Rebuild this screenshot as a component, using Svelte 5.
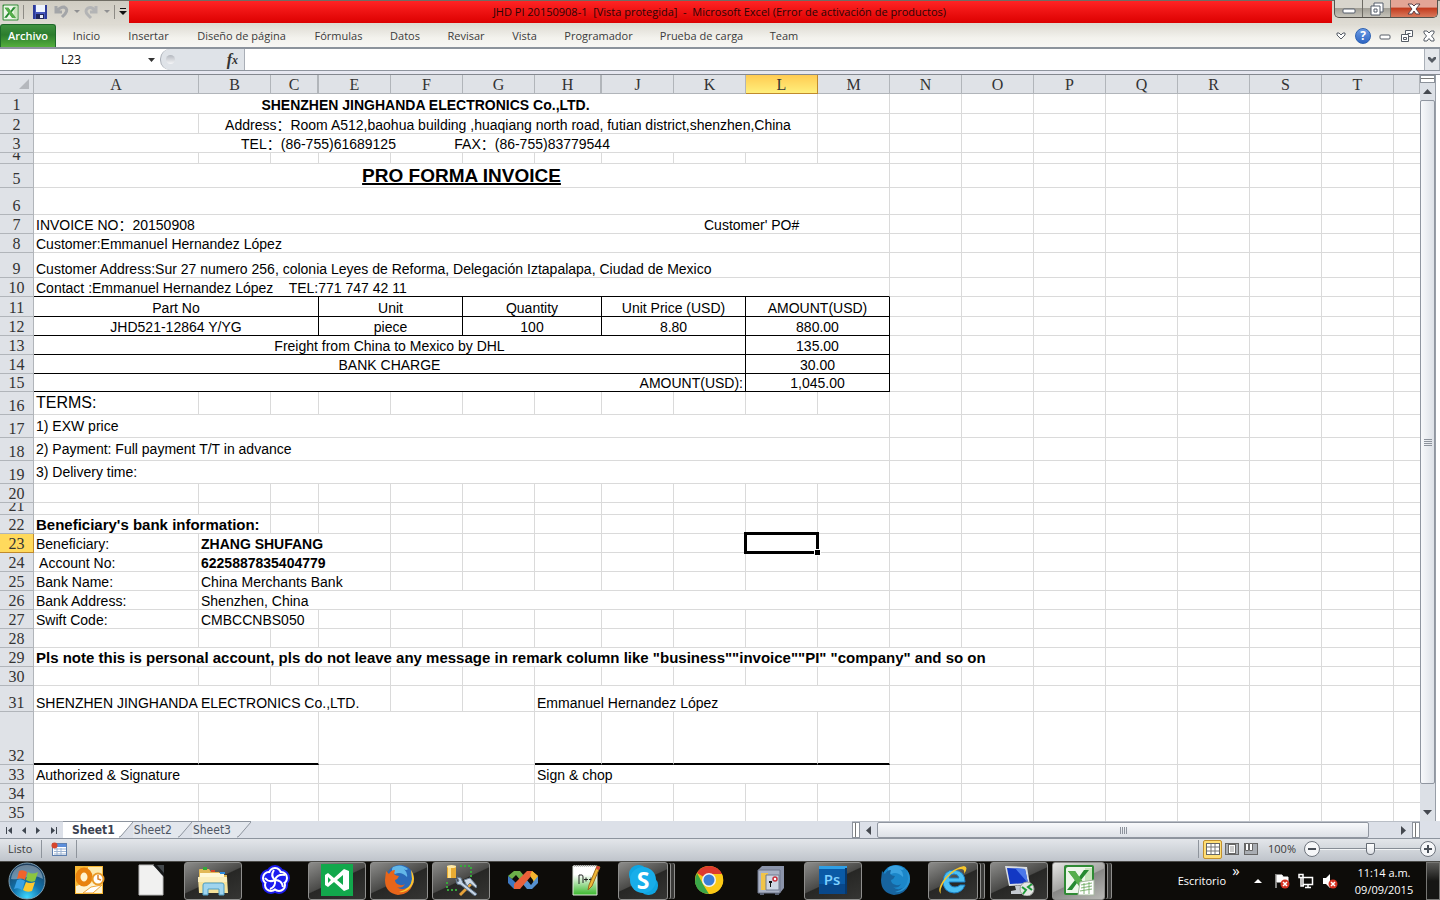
<script>
  const columns = [
    ['A', 165], ['B', 72], ['C', 48], ['E', 72], ['F', 72], ['G', 72], ['H', 67],
    ['J', 72], ['K', 72], ['L', 72], ['M', 72], ['N', 72], ['O', 72], ['P', 72],
    ['Q', 72], ['R', 72], ['S', 72], ['T', 72], ['', 0],
  ];

  // Each row: height and its leading cells as [span, text, classes]; the rest are single empty cells.
  const rowData = [
    [20, [[10, 'SHENZHEN JINGHANDA ELECTRONICS Co.,LTD.', 'center bold']]],
    [20, [[1], [9, 'Address：Room A512,baohua building ,huaqiang north road, futian district,shenzhen,China', 'center']]],
    [19, [[10, 'TEL：(86-755)61689125               FAX：(86-755)83779544', 'center']]],
    [11, []],
    [24, [[11, 'PRO FORMA INVOICE', 'center bold heading']]],
    [27, [[11]]],
    [19, [[8, 'INVOICE NO：20150908', 'open'], [3, "Customer' PO#", 'indent']]],
    [19, [[11, 'Customer:Emmanuel Hernandez López']]],
    [25, [[11, 'Customer Address:Sur 27 numero 256, colonia Leyes de Reforma, Delegación Iztapalapa, Ciudad de Mexico']]],
    [19, [[11, 'Contact :Emmanuel Hernandez López    TEL:771 747 42 11', 'ruled-below']]],
    [20, [[3, 'Part No', 'center ruled'], [2, 'Unit', 'center ruled'], [2, 'Quantity', 'center ruled'], [2, 'Unit Price (USD)', 'center ruled'], [2, 'AMOUNT(USD)', 'center ruled']]],
    [19, [[3, 'JHD521-12864 Y/YG', 'center ruled'], [2, 'piece', 'center ruled'], [2, '100', 'center ruled'], [2, '8.80', 'center ruled'], [2, '880.00', 'center ruled']]],
    [19, [[9, 'Freight from China to Mexico by DHL', 'center ruled'], [2, '135.00', 'center ruled']]],
    [19, [[9, 'BANK CHARGE', 'center ruled'], [2, '30.00', 'center ruled']]],
    [18, [[9, 'AMOUNT(USD):', 'right ruled'], [2, '1,045.00', 'center ruled']]],
    [23, [[1, 'TERMS:', 'large middle']]],
    [23, [[11, '1) EXW price', 'middle']]],
    [23, [[11, '2) Payment: Full payment T/T in advance', 'middle']]],
    [23, [[11, '3) Delivery time:', 'middle']]],
    [19, []],
    [12, []],
    [19, [[2, "Beneficiary's bank information:", 'bold notice']]],
    [19, [[1, 'Beneficiary:'], [3, 'ZHANG SHUFANG', 'bold'], [1], [1], [1], [1], [1], [1, '', 'selected']]],
    [19, [[1, ' Account No:'], [3, '6225887835404779', 'bold']]],
    [19, [[1, 'Bank Name:'], [3, 'China Merchants Bank']]],
    [19, [[1, 'Bank Address:'], [10, 'Shenzhen, China']]],
    [19, [[1, 'Swift Code:'], [2, 'CMBCCNBS050']]],
    [19, []],
    [19, [[13, 'Pls note this is personal account, pls do not leave any message in remark column like "business""invoice""PI" "company" and so on', 'bold notice']]],
    [19, []],
    [26, [[4, 'SHENZHEN JINGHANDA ELECTRONICS Co.,LTD.'], [1], [1], [5, 'Emmanuel Hernandez López']]],
    [53, [[1, '', 'signature'], [2, '', 'signature'], [3], [1, '', 'signature'], [1, '', 'signature'], [2, '', 'signature'], [1, '', 'signature']]],
    [19, [[3, 'Authorized & Signature'], [3], [5, 'Sign & chop']]],
    [19, []],
    [19, []],
  ];

  const rows = rowData.map(([height, lead], i) => {
    const used = lead.reduce((n, c) => n + c[0], 0);
    const cells = [...lead, ...Array.from({ length: columns.length - used }, () => [1])];
    return { number: i + 1, height, cells };
  });

  const ribbon = [
    ['Inicio', 57], ['Insertar', 67], ['Diseño de página', 119], ['Fórmulas', 75], ['Datos', 58],
    ['Revisar', 64], ['Vista', 53], ['Programador', 95], ['Prueba de carga', 111], ['Team', 54],
  ];

  const apps = [
    ['outlook', 'Outlook', ''], ['writer', 'LibreOffice', ''], ['explorer', 'Explorador', 'running'],
    ['knot', 'Navegador', ''], ['studio', 'Visual Studio', 'running'], ['firefox', 'Firefox', 'running'],
    ['tools', 'Herramientas', 'running'], ['vs', 'Visual Studio 2010', ''], ['notepad', 'Notepad++', ''],
    ['skype', 'Skype', 'running stacked'], ['chrome', 'Chrome', ''], ['safe', 'Caja fuerte', ''],
    ['ps', 'Photoshop', 'running'], ['dev', 'Firefox Developer', ''], ['ie', 'Internet Explorer', 'running stacked'],
    ['remote', 'Escritorio remoto', 'running'], ['excel', 'Excel', 'running stacked current'],
  ];

  let cellRef = $state('L23');
  let formula = $state('');
  let zoom = $state(50);
</script>

{#snippet excelLogo()}
  <rect x="1" y="1" width="30" height="30" rx="2" fill="#2f8a34" />
  <path d="M3 5q0-2 2-2h24v26H3z" fill="#eef7ea" />
  <path d="M22 4h7v24h-7z" fill="#c9e4bd" />
  <path d="M5 7h7l4 6 5-7h5l-8 10 8 10h-7l-5-7-5 7H4l8-10z" fill="#268a31" />
  <path d="M5 7h7l14 19h-7z" fill="#56ae4b" />
{/snippet}

<div class="app">
  <header class="title-bar">
    <div class="quick">
      <svg class="logo" viewBox="0 0 32 32" width="17" height="17">{@render excelLogo()}</svg>
      <i class="sep"></i>
      <button class="save" aria-label="Guardar">
        <svg viewBox="0 0 16 16" width="16" height="16"><path d="M1 1h13l1 1v13H1z" fill="#4557bd" /><path d="M1 1h2v14H1zM13 1h2v14h-2z" fill="#2c3b9a" /><path d="M4 1h9v7H4z" fill="#eef4ff" /><path d="M4 10h8v5H4z" fill="#20265c" /><path d="M8 11h3v3H8z" fill="#e8ecf8" /></svg>
      </button>
      <button aria-label="Deshacer">
        <svg viewBox="0 0 26 16" width="26" height="16"><path d="M2 2v6h6M3 7q3-4 7-4 5 2 1 7l-3 3" fill="none" stroke="#a3a5a8" stroke-width="3" /><path d="M20 6h6l-3 3z" fill="#8f9092" /></svg>
      </button>
      <button aria-label="Rehacer">
        <svg viewBox="0 0 26 16" width="26" height="16"><path d="M12 2v6H6M11 7Q8 2 4 4q-4 3 0 7l3 3" fill="none" stroke="#b3b4b5" stroke-width="3" /><path d="M20 6h6l-3 3z" fill="#8f9092" /></svg>
      </button>
      <i class="sep"></i>
      <button aria-label="Personalizar barra">
        <svg viewBox="0 0 8 8" width="8" height="8"><path d="M1 0h6v1H1zM0 3h8L4 7z" fill="#111" /></svg>
      </button>
    </div>
    <h1>JHD PI 20150908-1&nbsp; [Vista protegida]&nbsp; -&nbsp; Microsoft Excel (Error de activación de productos)</h1>
    <div class="window-buttons">
      <button aria-label="Minimizar"><svg viewBox="0 0 14 12" width="14" height="12"><rect x="1" y="6" width="12" height="4" rx="1" fill="#fff" stroke="#555d6b" /></svg></button>
      <button aria-label="Restaurar"><svg viewBox="0 0 14 14" width="14" height="14"><path d="M4 1h9v9h-3v3H1V4h3z" fill="#fff" stroke="#555d6b" /><path d="M4 4h6v6M4 7h3v3H4z" fill="none" stroke="#555d6b" /></svg></button>
      <button class="close" aria-label="Cerrar"><svg viewBox="0 0 14 12" width="14" height="12"><path d="M1 1h4l2 2 2-2h4L9 6l4 5H9L7 8l-2 3H1l4-5z" fill="#fff" stroke="#5a4048" /></svg></button>
    </div>
  </header>

  <nav class="ribbon">
    <button class="file">Archivo</button>
    {#each ribbon as [label, width]}
      <button style="width:{width}px">{label}</button>
    {/each}
    <div class="ribbon-tools">
      <button aria-label="Minimizar la cinta"><svg viewBox="0 0 10 8" width="10" height="8"><path d="M1 1h2l2 2 2-2h2v2L5 7 1 3z" fill="#fff" stroke="#565d66" /></svg></button>
      <button aria-label="Ayuda" class="help">?</button>
      <button aria-label="Minimizar libro"><svg viewBox="0 0 12 12" width="12" height="12"><rect x="1" y="5" width="10" height="4" rx="1" fill="#fff" stroke="#565d66" /></svg></button>
      <button aria-label="Restaurar libro"><svg viewBox="0 0 12 12" width="12" height="12"><path d="M4.500 .5h7v6h-7z" fill="#fff" stroke="#565d66" /><path d="M.5 4.500h7v7h-7z" fill="#fff" stroke="#565d66" /><path d="M2.500 7.500h3v2h-3zM6.500 3.500h3" fill="none" stroke="#565d66" /></svg></button>
      <button aria-label="Cerrar libro"><svg viewBox="0 0 12 12" width="12" height="12"><path d="M1 1h3l2 2 2-2h3v2L8.500 6 11 9v2H8L6 8.500 4 11H1V9l2.500-3L1 3z" fill="#fff" stroke="#565d66" /></svg></button>
    </div>
  </nav>

  <div class="formula-bar">
    <input class="name-box" aria-label="Cuadro de nombres" bind:value={cellRef} />
    <button class="name-drop" aria-label="Nombres"><svg viewBox="0 0 7 4" width="7" height="4"><path d="M0 0h7L3.500 4z" fill="#333" /></svg></button>
    <div class="fx"><i></i><button aria-label="Insertar función"><em>f</em><sub>x</sub></button></div>
    <input class="formula" aria-label="Barra de fórmulas" bind:value={formula} />
    <button class="expand" aria-label="Expandir barra de fórmulas"><svg viewBox="0 0 8 6" width="8" height="6"><path d="M0 0h2l2 2 2-2h2v2L4 6 0 2z" fill="#555b63" /></svg></button>
  </div>
  <div class="strip"></div>

  <main>
    <div class="grid">
      <table>
        <colgroup>
          <col class="gutter" />
          {#each columns as [, width]}
            <col style={width ? `width:${width}px` : undefined} />
          {/each}
        </colgroup>
        <thead>
          <tr>
            <th class="corner"><svg viewBox="0 0 10 10" width="10" height="10"><path d="M10 0v10H0z" fill="#b5b8bd" /></svg></th>
            {#each columns as [name]}
              <th scope="col" class:active={name === 'L'} class:hidden-next={name === 'C' || name === 'H'}>{name}</th>
            {/each}
          </tr>
        </thead>
        <tbody>
          {#each rows as row}
            <tr>
              <th scope="row" class:active={row.number === 23}><div style="height:{row.height - 1}px">{row.number}</div></th>
              {#each row.cells as [span, text, kind]}
                <td colspan={span} class={kind} style="height:{row.height}px">{text ?? ''}</td>
              {/each}
            </tr>
          {/each}
        </tbody>
      </table>
    </div>
    <div class="v-scroll">
      <i class="split"></i>
      <button aria-label="Subir"><svg viewBox="0 0 9 5" width="9" height="5"><path d="M0 5h9L4.500 0z" fill="#44484f" /></svg></button>
      <div class="v-thumb"><i></i><i></i><i></i><i></i></div>
      <button class="down" aria-label="Bajar"><svg viewBox="0 0 9 5" width="9" height="5"><path d="M0 0h9L4.500 5z" fill="#44484f" /></svg></button>
    </div>
  </main>

  <div class="sheet-bar">
    <div class="sheet-nav">
      <button aria-label="Primera hoja"><svg viewBox="0 0 7 7" width="7" height="7"><path d="M0 0h1v7H0zM6 0v7L2 3.500z" fill="#3f4650" /></svg></button>
      <button aria-label="Hoja anterior"><svg viewBox="0 0 7 7" width="7" height="7"><path d="M5 0v7L1 3.500z" fill="#3f4650" /></svg></button>
      <button aria-label="Hoja siguiente"><svg viewBox="0 0 7 7" width="7" height="7"><path d="M1 0v7l4-3.500z" fill="#3f4650" /></svg></button>
      <button aria-label="Última hoja"><svg viewBox="0 0 7 7" width="7" height="7"><path d="M6 0h1v7H6zM1 0v7l4-3.500z" fill="#3f4650" /></svg></button>
    </div>
    {#each ['Sheet1', 'Sheet2', 'Sheet3'] as sheet, i}
      <button class="sheet" class:current={i === 0}>
        <span>{sheet}</span>
        <svg viewBox="0 0 14 16" width="14" height="16"><path d="M0 0h14L1 15H0z" fill={i ? '#e3e7ed' : '#fff'} /><path d="M14 0 2 14q-1 1-2 1" fill="none" stroke="#8d949e" /></svg>
      </button>
    {/each}
    <div class="h-scroll">
      <i class="handle"></i>
      <button aria-label="Izquierda"><svg viewBox="0 0 5 9" width="5" height="9"><path d="M5 0v9L0 4.500z" fill="#44484f" /></svg></button>
      <div class="h-thumb"><i></i><i></i><i></i><i></i></div>
      <button class="go-right" aria-label="Derecha"><svg viewBox="0 0 5 9" width="5" height="9"><path d="M0 0v9l5-4.500z" fill="#44484f" /></svg></button>
      <i class="handle"></i>
    </div>
  </div>

  <footer class="status">
    <span class="ready">Listo</span>
    <i class="bar"></i>
    <button class="macro" aria-label="Grabar macro"><svg viewBox="0 0 16 14" width="16" height="14"><rect x="1.500" y="1.500" width="14" height="12" fill="#fff" stroke="#5d7fae" /><path d="M2 2h13v3H2z" fill="#5c8edb" /><path d="M3 7h12M3 9.500h12M3 12h12M6 6v7M10 6v7" stroke="#9db4d2" /><circle cx="3.500" cy="3.500" r="3" fill="#d6452c" /></svg></button>
    <i class="bar"></i>
    <div class="views">
      <i class="bar"></i>
      <button class="view on" aria-label="Normal"><svg viewBox="0 0 14 12" width="14" height="12"><rect x=".5" y=".5" width="13" height="11" fill="#fff" stroke="#666" /><path d="M1 4h12M1 8h12M5 1v10M9 1v10" stroke="#777" /></svg></button>
      <button class="view" aria-label="Diseño de página"><svg viewBox="0 0 14 12" width="14" height="12"><rect x=".5" y=".5" width="13" height="11" fill="#a9adb3" stroke="#666" /><rect x="3.500" y="1.500" width="7" height="9" fill="#fff" stroke="#666" /><path d="M5 4h4M5 6h4M5 8h4" stroke="#999" /></svg></button>
      <button class="view" aria-label="Vista previa de salto de página"><svg viewBox="0 0 14 12" width="14" height="12"><rect x=".5" y=".5" width="13" height="11" fill="#a9adb3" stroke="#666" /><path d="M1.500 .5h3v7h-3zM5.500 .5h3v7h-3z" fill="#fff" stroke="#666" /></svg></button>
      <label for="zoom">100%</label>
      <button class="round" aria-label="Alejar"><svg viewBox="0 0 16 16" width="16" height="16"><circle cx="8" cy="8" r="7.500" fill="#f6f7f9" stroke="#6e747d" /><path d="M4 7h8v2H4z" fill="#4a5058" /></svg></button>
      <input id="zoom" type="range" min="0" max="100" bind:value={zoom} />
      <button class="round" aria-label="Acercar"><svg viewBox="0 0 16 16" width="16" height="16"><circle cx="8" cy="8" r="7.500" fill="#f6f7f9" stroke="#6e747d" /><path d="M4 7h3V4h2v3h3v2H9v3H7V9H4z" fill="#4a5058" /></svg></button>
    </div>
  </footer>

  <div class="taskbar">
    <button class="start" aria-label="Inicio">
      <svg viewBox="0 0 38 38" width="38" height="38">
        <defs><radialGradient id="orb" cx=".5" cy=".95" r=".9"><stop offset="0" stop-color="#3fd8ff" /><stop offset=".45" stop-color="#1173ad" /><stop offset="1" stop-color="#1c3d5c" /></radialGradient></defs>
        <circle cx="19" cy="19" r="18" fill="url(#orb)" stroke="#7fa0b4" />
        <path d="M3 17Q5 3 19 3t16 14q-8-5-16-2T3 17z" fill="#fff" opacity=".35" />
        <path d="M11 9q4-2 8 1l-2 8q-4-3-8-1z" fill="#f0642b" /><path d="M20 10q4 3 10 0l-3 9q-4 2-9-1z" fill="#8cc63f" />
        <path d="M9 18q4-2 8 1l-3 9q-4-3-8-1z" fill="#39a2e6" /><path d="M18 20q4 2 9 0l-3 9q-5 2-9-1z" fill="#fdc82f" />
      </svg>
    </button>
    {#each apps as [id, label, state]}
      <div class="slot">
        <button class="task {state}" aria-label={label}>
          <svg viewBox="0 0 32 32" width="32" height="32">
            {#if id === 'outlook'}
              <rect x="2" y="2" width="28" height="28" fill="#f7b733" /><path d="M15 3h14v26H15z" fill="#fde9ad" /><path d="M3 22l10-3 16 1v9H3z" fill="#fff3cf" /><path d="m10 29 8-6 11-2-9 8z" fill="#fff" stroke="#eda53a" /><ellipse cx="11" cy="13" rx="6" ry="7" fill="#fff3cf" stroke="#e8820e" stroke-width="5" /><circle cx="25" cy="15" r="5.500" fill="#fff" stroke="#e89a28" stroke-width="2" /><path d="M25 11v4l3 1" fill="none" stroke="#d9822b" stroke-width="1.500" />
            {:else if id === 'writer'}
              <path d="M4 1h15l9 11v19H4z" fill="#f1f1f0" stroke="#bcbcbc" /><path d="M20 1h9v9z" fill="#44494c" /><path d="m18 1 11 12V9l-7-8z" fill="#17191a" />
            {:else if id === 'explorer'}
              <path d="M2 6q0-1 1-1h9l2 3h8l2 3h6v18H2z" fill="#e2b957" /><path d="M3 9h24v5H3z" fill="#fff8d6" /><path d="M1 13h29l1 16H2z" fill="#f6e29a" /><path d="M1 13h29v5H1z" fill="#fbeebc" /><path d="M6 3h4v3H6z" fill="#33a639" /><path d="M14 6h4v2h-4z" fill="#d14527" /><path d="M23 8h5v2h-5z" fill="#2c8be0" /><path d="M6 31V21q0-2 2-2h17q2 0 2 2v10h-5v-6H11v6z" fill="#9fd4ee" stroke="#4d9cc4" />
            {:else if id === 'knot'}
              <g fill="#1c1cf0" stroke="#1c1cf0" stroke-width="6"><circle cx="16" cy="10" r="6" /><circle cx="22" cy="14" r="6" /><circle cx="20" cy="21" r="6" /><circle cx="12" cy="21" r="6" /><circle cx="10" cy="14" r="6" /></g>
              <g fill="#fff"><circle cx="16" cy="10" r="7" /><circle cx="22" cy="14" r="7" /><circle cx="20" cy="21" r="7" /><circle cx="12" cy="21" r="7" /><circle cx="10" cy="14" r="7" /></g>
              <g fill="#1c1cf0"><circle cx="16" cy="10" r="5" /><circle cx="22" cy="14" r="5" /><circle cx="20" cy="21" r="5" /><circle cx="12" cy="21" r="5" /><circle cx="10" cy="14" r="5" /><circle cx="16" cy="16" r="6" /></g>
              <g fill="none" stroke="#fff" stroke-width="2"><path d="M16 16q-5-4-1-10" /><path d="M16 16q2-6 10-5" /><path d="M16 16q7 0 8 7" /><path d="M16 16q1 7-5 9" /><path d="M16 16q-6 3-10-2" /></g>
            {:else if id === 'studio'}
              <rect width="32" height="32" fill="#12a84c" /><path d="M4 11l3-2 6 5 10-9 5 2v18l-5 2-10-9-6 5-3-2zM22 11l-6 5 6 5zM7 13v6l3-3z" fill="#fff" fill-rule="evenodd" />
            {:else if id === 'firefox' || id === 'dev'}
              <circle cx="17" cy="15" r="14" fill={id === 'dev' ? '#1b86c9' : '#2b69b8'} />
              <path d="M10 3q8-4 15 2-2 2-4 0 4 4 3 8-6-6-12-3-5-3-2-7z" fill={id === 'dev' ? '#3aa2e0' : '#63b7e8'} />
              <path d="M28 6q4 7 2 14-4 11-15 11Q2 29 2 16l1-9 3 3q2-4 6-4l-1 4q2 2 5 2-1 3-4 4 0 4 5 5 2 1 5-1-3 5-8 3 6 5 13-1 5-6 1-16z" fill={id === 'dev' ? '#17649f' : '#e8651a'} />
              <path d="M28 6q6 9 0 17-5 6-12 5 12-3 13-13z" fill={id === 'dev' ? '#2792d2' : '#fbc52d'} />
            {:else if id === 'tools'}
              <path d="M2 2h9v12H2z" fill="#e9ac32" /><path d="M3 2h3v12H3z" fill="#ffe08a" /><ellipse cx="6.500" cy="2.500" rx="4.500" ry="1.500" fill="#ffe9a6" /><path d="M15 2h11v12M2 18v8h10" fill="none" stroke="#38a83c" stroke-width="2" stroke-dasharray="2 2" /><path d="m14 30 11-11 2 2-11 11z" fill="#e5a23a" /><path d="m19 16 6-2 7 8-1 2-6-5-3 3z" fill="#cfdbe8" stroke="#6d7f92" /><path d="M11 15l1 5 4 1 14 11 2-2-14-11-2-5-4-1 2 4-2 1z" fill="#c6d5e6" stroke="#63778d" />
            {:else if id === 'vs'}
              <path d="M1 12 7 7h6l5 6-4 4-5-6-4 4z" fill="#6cb04a" /><path d="M1 12v7l6 6 4-4-5-5z" fill="#3d78c2" /><path d="M31 12l-6-5-5 1 6 8 1 3z" fill="#f0c13a" /><path d="M31 12v7l-6 6h-5l-5-6 4-4 5 6 3-4z" fill="#5490d0" /><path d="M7 25h6L25 11V7h-5L7 20z" fill="#e8613a" /><path d="M25 7l6 5-4 3-4-4z" fill="#f6b52e" />
            {:else if id === 'notepad'}
              <defs><linearGradient id="npp" x2="0" y2="1"><stop offset=".3" stop-color="#fff" /><stop offset="1" stop-color="#39b82b" /></linearGradient></defs>
              <path d="M4 2h24v29H4z" fill="url(#npp)" stroke="#e6ebe2" /><path d="M5 2h22" stroke="#bbb" stroke-width="2" stroke-dasharray="1 1" /><path d="M10 20v-9h3q1 0 1 2v6M15 15.500h4M17 13.500v4M20 15.500h4M22 13.500v4" fill="none" stroke="#222" /><path d="m19 26 1-5L28 2l3 1-8 19z" fill="#efb736" stroke="#9a6a1f" /><path d="m28 2 3 1-1 3-3-1z" fill="#d7443b" />
            {:else if id === 'skype'}
              <rect x="2" y="1" width="19" height="19" rx="9" fill="#0fa5e2" /><rect x="12" y="12" width="19" height="19" rx="9" fill="#0fa5e2" /><circle cx="16" cy="16" r="13" fill="#18aeea" /><text x="16" y="25" text-anchor="middle" class="skype">S</text>
            {:else if id === 'chrome'}
              <circle cx="16" cy="16" r="14" fill="#fbc916" /><path d="M16 16 4 9q4-7 12-7 9 0 13 8z" fill="#dd3b2e" /><path d="M4 9l7 13 5 8Q5 30 2 19q0-6 2-10z" fill="#3aa648" /><path d="M16 10h12l1 0q4 10-4 17-4 3-9 3l6-11z" fill="#fbc916" /><circle cx="16" cy="16" r="7" fill="#f4f4f4" /><circle cx="16" cy="16" r="5.500" fill="#3c7fd6" />
            {:else if id === 'safe'}
              <path d="M3 6l4-4h22v22l-4 5H3z" fill="#8b94aa" /><path d="M3 6h22v23H3z" fill="#aab2c4" stroke="#6c7589" /><path d="M6 9h7v17H6z" fill="#f0c44a" /><path d="M11 11h13v15H11z" fill="#cfd6e3" stroke="#707a90" /><circle cx="20" cy="15" r="2" fill="#fff" stroke="#c62f3b" stroke-width="1.500" /><path d="M14 17h3v2h-1v4h-1v-4h-1z" fill="#111" /><path d="M5 29h4v2H5zM20 29h4v2h-4z" fill="#5a6274" />
            {:else if id === 'ps'}
              <path d="M2 2h28v28H2z" fill="#0a5aa6" /><path d="M2 2h28v3H2z" fill="#2f9fe6" /><path d="M28 4h2v26h-2z" fill="#06386d" /><path d="M2 20h26v10H2z" fill="#08478a" /><text x="15" y="21" text-anchor="middle" class="ps">Ps</text>
            {:else if id === 'ie'}
              <path d="M28 18H12q1 5 6 5 3 0 5-2h5q-3 8-11 8-11-1-11-12Q7 6 17 6q11 1 11 12zM12 14h10q-1-4-5-4t-5 4z" fill="#4cc0f3" stroke="#1c80c4" fill-rule="evenodd" /><path d="M4 30Q-1 26 8 14 18 3 27 2q5 1 0 8 1-5-3-5-6 0-14 9-8 10-6 16z" fill="#f6c62c" />
            {:else if id === 'remote'}
              <path d="M2 2l22 1 3 18-21 1z" fill="#d9dde2" /><path d="m4 4 18 1 3 14-18 1z" fill="#1338c4" /><path d="m12 4 10 1 3 14z" fill="#4b78ea" /><path d="M12 22h7l1 4h5v4H8v-3l5-1z" fill="#c5cad1" /><circle cx="24" cy="25" r="7" fill="#e4e6e4" stroke="#9b9f9c" /><path d="m19 23 4 3-3 4M29 20l-4 3 4 3" fill="none" stroke="#1f9a38" stroke-width="2" />
            {:else}
              {@render excelLogo()}
              <path d="m17 18 14-2v15H15z" fill="#fff" stroke="#a6b8a0" /><path d="M18 21l11-2M18 24l11-2M17 27l12-2M21 19v11M26 18v12" stroke="#7fb474" />
            {/if}
          </svg>
        </button>
      </div>
    {/each}
    <div class="tray">
      <span class="desk">Escritorio</span>
      <span class="more">»</span>
      <button aria-label="Mostrar iconos ocultos"><svg viewBox="0 0 8 4" width="8" height="4"><path d="M0 4h8L4 0z" fill="#fff" /></svg></button>
      <button aria-label="Centro de actividades"><svg viewBox="0 0 16 16" width="16" height="16"><path d="M2 1v14M3 2h5l1 2h5v6H9L8 9H3z" fill="#fff" stroke="#fff" /><circle cx="11" cy="11" r="4.500" fill="#d63323" /><path d="m9 9 4 4M13 9l-4 4" stroke="#fff" stroke-width="1.500" /></svg></button>
      <button aria-label="Red"><svg viewBox="0 0 16 16" width="16" height="16"><path d="M5 4.500h9.500v7H5zM7 14.500h6M10 12v2M1 1.500h4v3H1zM3 5v8h3" fill="none" stroke="#fff" stroke-width="1.500" /></svg></button>
      <button aria-label="Volumen"><svg viewBox="0 0 16 16" width="16" height="16"><path d="M1 5h3l4-4v14l-4-4H1z" fill="#fff" /><circle cx="11" cy="11" r="4.500" fill="#d63323" /><path d="m9 9 4 4M13 9l-4 4" stroke="#fff" stroke-width="1.500" /></svg></button>
      <time>11:14 a.m.<br />09/09/2015</time>
      <button class="show-desktop" aria-label="Mostrar escritorio"></button>
    </div>
  </div>
</div>

<style>
  :global(body) { margin: 0; }
  .app {
    display: flex;
    flex-direction: column;
    height: 100vh;
    overflow: hidden;
    background: #fff;
    font: 12px/16px 'Open Sans', 'Noto Sans', sans-serif;
    color: #3b3b3b;
  }
  *, *::before, *::after { box-sizing: border-box; }
  button {
    display: flex;
    align-items: center;
    justify-content: center;
    padding: 0;
    border: 0;
    background: none;
    font: inherit;
    color: inherit;
  }
  svg { display: block; flex: none; }
  input { border: 0; padding: 0; font: inherit; min-width: 0; border-radius: 0; outline: 0; }

  .title-bar {
    display: flex;
    flex: none;
    height: 24px;
    background: linear-gradient(#6f6d64 0 1px, #cfccc2 1px, #dedbd3);
  }
  .quick { display: flex; align-items: center; gap: 4px; width: 129px; padding: 0 2px; flex: none; }
  .quick .sep { width: 1px; height: 14px; background: #8d8b85; flex: none; }
  .quick button { flex: none; }
  .quick .save { margin: 0 2px 0 4px; }
  h1 {
    flex: 1;
    min-width: 0;
    margin: 1px 0;
    padding-right: 22px;
    overflow: hidden;
    background: linear-gradient(#ff2424, #dc0000);
    font: 11px/22px 'Open Sans', 'Noto Sans', sans-serif;
    color: #2b0606;
    text-align: center;
    white-space: nowrap;
  }
  .window-buttons {
    display: flex;
    flex: none;
    width: 104px;
    height: 18px;
    margin: 0 2px;
    border: 1px solid #55524c;
    border-top: 0;
    border-radius: 0 0 5px 5px;
    overflow: hidden;
    background: linear-gradient(#d8d5cd 45%, #a29f96 50%, #c6c3ba);
  }
  .window-buttons button { width: 28px; border-right: 1px solid #6d6a63; }
  .window-buttons .close { flex: 1; border-right: 0; background: linear-gradient(#e3a596 40%, #c33d20 50%, #d9795c); }

  .ribbon {
    display: flex;
    flex: none;
    height: 25px;
    border-bottom: 2px solid #8c939c;
    background: linear-gradient(#dddad2, #f3f2ed 60%, #f8f7f4);
  }
  .ribbon > button { flex: none; font-size: 11px; }
  .ribbon .file {
    width: 56px;
    margin-right: 2px;
    border: 1px solid #1e6a2a;
    border-bottom: 0;
    border-radius: 3px 3px 0 0;
    background: linear-gradient(#3f9140, #2c7d2d 45%, #54ae3c);
    color: #fff;
    font-weight: 600;
  }
  .ribbon-tools { display: flex; align-items: center; margin-left: auto; }
  .ribbon-tools button { width: 22px; height: 22px; }
  .ribbon-tools .help {
    width: 16px;
    height: 16px;
    margin: 0 3px;
    border: 1px solid #2d62b3;
    border-radius: 50%;
    background: linear-gradient(#6b9be4, #2f66c4);
    color: #fff;
    font-weight: 700;
  }

  .formula-bar { display: flex; flex: none; height: 22px; border-bottom: 1px solid #8f959e; background: #fff; }
  .name-box { width: 142px; text-align: center; color: #111; background: #fff; }
  .name-drop { width: 18px; }
  .fx {
    display: flex;
    align-items: center;
    justify-content: space-between;
    width: 85px;
    padding: 0 6px 0 5px;
    border: 1px solid #a9aeb6;
    border-width: 0 1px 0 1px;
    border-radius: 10px 0 0 10px;
    background: #dfe3e8;
  }
  .fx i { width: 9px; height: 9px; border-radius: 50%; background: linear-gradient(#b4b8bf, #f5f6f8); }
  .fx button { font: italic bold 16px/16px 'Liberation Serif', serif; color: #333; }
  .fx sub { font-size: 12px; line-height: 12px; }
  .formula { flex: 1; }
  .expand { width: 16px; border: 1px solid #aab0b8; border-width: 0 1px; background: #e4e7eb; }
  .strip { flex: none; height: 4px; background: #e6e7f0; border-bottom: 1px solid #84888f; }

  main { display: flex; flex: 1; min-height: 0; }
  .grid { flex: 1; min-width: 0; overflow: hidden; }
  table {
    width: 100%;
    table-layout: fixed;
    border-collapse: separate;
    border-spacing: 0;
    font: 14px/16px 'Liberation Sans', 'Noto Sans CJK SC', Arial, sans-serif;
    color: #000;
  }
  .gutter { width: 34px; }
  th {
    padding: 0;
    border: 1px solid #b1b5ba;
    border-width: 0 1px 1px 0;
    background: #dfe2e7;
    font: 16px/16px 'Liberation Serif', serif;
    color: #333;
  }
  thead th { height: 19px; padding-top: 2px; }
  th.corner { padding: 4px 4px 4px 19px; }
  th div { display: flex; align-items: flex-end; justify-content: center; overflow: hidden; }
  th.hidden-next { border-right-width: 2px; }
  th.active { border-color: #c08a2c; background: #ffd95c; }
  thead th.active { background: linear-gradient(#ffcb52, #ffef7c); }
  td {
    padding: 0 2px;
    border: 1px solid #dadada;
    border-width: 0 1px 1px 0;
    vertical-align: bottom;
    white-space: pre;
  }
  tbody tr td:last-child { border-right: 0; }
  .center { text-align: center; }
  .right { text-align: right; }
  .bold { font-weight: 700; }
  .notice { font-size: 15px; }
  .middle { vertical-align: middle; }
  .large { font-size: 16px; }
  .heading { font-size: 19px; line-height: 22px; text-decoration: underline; text-decoration-thickness: 2px; }
  .open { border-right: 0; }
  .indent { padding-left: 30px; }
  .ruled { border-color: #000; }
  .ruled-below { border-bottom-color: #000; }
  .signature { border-bottom: 2px solid #000; }
  .selected { position: relative; }
  .selected::before { content: ''; position: absolute; inset: -2px; z-index: 1; border: 3px solid #000; }
  .selected::after {
    content: '';
    position: absolute;
    right: -4px;
    bottom: -4px;
    z-index: 2;
    width: 7px;
    height: 7px;
    border: 1px solid #fff;
    background: #000;
  }

  .v-scroll {
    display: flex;
    flex-direction: column;
    flex: none;
    width: 16px;
    margin-right: 4px;
    border-right: 1px solid #989ea7;
    background: #dce0e6;
  }
  .split { height: 8px; border: 1px solid #8c929b; background: linear-gradient(#fff 2px, #777 2px 3px, #fff 3px); }
  .v-scroll button { height: 17px; flex: none; }
  .v-scroll .down { margin-top: 20px; }
  .v-thumb {
    display: flex;
    flex: 1;
    flex-direction: column;
    align-items: center;
    justify-content: center;
    gap: 1px;
    border: 1px solid #9096a0;
    border-radius: 2px;
    background: linear-gradient(90deg, #f8f9fb, #dde1e7);
  }
  .v-thumb i { width: 8px; height: 1px; background: #8d939c; }

  .sheet-bar { display: flex; flex: none; height: 18px; border-bottom: 1px solid #8d949e; background: #dce0e8; }
  .sheet-nav { display: flex; align-items: center; justify-content: space-around; width: 63px; padding: 0 2px; border-top: 1px solid #b9bec6; }
  .sheet {
    border-top: 1px solid #8d949e;
    background: none;
    color: #4e5663;
    font: 12px/16px 'DejaVu Sans Condensed', 'DejaVu Sans', sans-serif;
    align-items: stretch;
  }
  .sheet span { padding: 0 6px 0 1px; background: #e3e7ed; }
  .sheet.current { font-weight: 700; color: #3b4250; }
  .sheet.current span { padding: 0 4px 0 9px; background: #fff; }
  .h-scroll { display: flex; flex: none; width: 568px; margin-left: auto; margin-right: 20px; border-top: 1px solid #b9bec6; }
  .handle { width: 8px; border: 1px solid #8c929b; background: linear-gradient(90deg, #fff 2px, #777 2px 3px, #fff 3px); }
  .h-scroll button { width: 17px; }
  .h-scroll .go-right { margin-left: 26px; }
  .h-thumb {
    display: flex;
    flex: 1;
    align-items: center;
    justify-content: center;
    gap: 1px;
    border: 1px solid #9096a0;
    border-radius: 2px;
    background: linear-gradient(#f8f9fb, #dde1e7);
  }
  .h-thumb i { width: 1px; height: 7px; background: #8d939c; }

  .status {
    display: flex;
    align-items: center;
    flex: none;
    height: 22px;
    padding: 0 4px 2px 8px;
    background: linear-gradient(#e3e6ea, #bfc4cb);
    font-size: 11px;
  }
  .bar { width: 1px; height: 18px; background: #8e949c; }
  .ready { width: 33px; }
  .macro { width: 34px; }
  .views { display: flex; align-items: center; margin-left: auto; }
  .view { width: 19px; height: 19px; }
  .view.on { margin-left: 4px; border: 1px solid #c2902e; border-radius: 2px; background: #ffdf77; }
  .views label { width: 44px; text-align: center; }
  .views input { width: 100px; height: 16px; margin: 0; appearance: none; background: linear-gradient(transparent 7px, #878d96 7px 8px, #f2f4f6 8px 9px, transparent 9px); }
  .views input::-webkit-slider-thumb {
    appearance: none;
    width: 9px;
    height: 12px;
    background: linear-gradient(#fff, #dfe2e7);
    border: 1px solid #656b74;
    border-radius: 1px 1px 5px 5px;
  }

  .taskbar {
    display: flex;
    flex: none;
    height: 39px;
    border-top: 1px solid #4b4b48;
    background: #0d0c09;
    color: #fff;
  }
  .start { width: 54px; margin-right: 4px; }
  .slot { width: 62px; padding: 0 2px; flex: none; }
  .task { width: 58px; height: 38px; padding-bottom: 2px; }
  .task.running {
    border: 1px solid #8f8f8d;
    border-radius: 3px;
    background: linear-gradient(155deg, #8c8c8a, #4a4a48 48%, #272725 50%, #353533);
  }
  .task.stacked { width: 50px; box-shadow: 3px 0 0 -1px #0d0c09, 4px 0 0 -1px #8f8f8d, 7px 0 0 -1px #3a3a38, 8px 0 0 -1px #8f8f8d; }
  .task.current { width: 53px; background: linear-gradient(155deg, #e6e6e4, #a6a6a4 48%, #878785 50%, #b9b9b6); }
  .skype { font: 700 23px 'Open Sans', sans-serif; fill: #fff; }
  .ps { font: 600 15px 'Open Sans', sans-serif; fill: #7fd0ff; }
  .tray { display: flex; align-items: center; margin-left: auto; font-size: 11px; }
  .tray button { width: 24px; height: 38px; }
  .more { width: 20px; padding-bottom: 22px; text-align: center; font-size: 15px; line-height: 16px; }
  time { width: 72px; margin: 0 6px; text-align: center; line-height: 17px; }
  .tray .show-desktop { width: 14px; border: 1px solid #777774; background: linear-gradient(#5a5a58, #161614 50%); }
</style>
